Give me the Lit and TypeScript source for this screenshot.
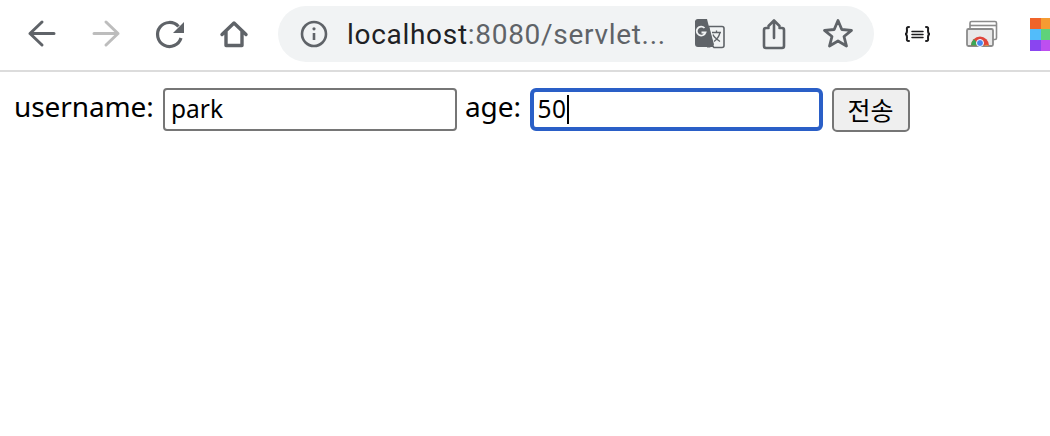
import { LitElement, html, css, svg } from "lit";
import { customElement } from "lit/decorators.js";

const G = "#5f6368";

@customElement("app-root")
export class AppRoot extends LitElement {
  static styles = css`
    :host { display: block; width: 1050px; height: 436px; background: #fff; overflow: hidden; font-family: "Noto Sans", "Noto Sans CJK KR", sans-serif; color: #000; }
    .toolbar { display: flex; align-items: center; height: 70px; border-bottom: 2px solid #dcdcdc; padding-left: 10px; box-sizing: content-box; overflow: hidden; }
    .cell { flex: none; display: block; width: 64px; height: 70px; }
    .omni { flex: none; display: flex; align-items: center; box-sizing: border-box; width: 596px; height: 56px; margin-left: 12px; margin-top: -2px; padding-left: 20px; border-radius: 28px; background: #f1f3f4; }
    .omni .info { flex: none; width: 32px; height: 32px; }
    .url { flex: none; width: 326px; margin-left: 17px; font: 28px Roboto, sans-serif; color: #5f6368; white-space: nowrap; letter-spacing: 0.7px; }
    .url b { font-weight: 400; color: #202124; }
    .tools { flex: none; display: flex; margin-left: 5px; }
    .tools svg { flex: none; display: block; width: 64px; height: 56px; }
    .ext { flex: none; display: block; width: 64px; height: 70px; }
    .ext.first { margin-left: 6px; }
    .grid { flex: none; display: grid; grid-template-columns: 11px 11px; grid-auto-rows: 11px; margin-left: 22px; margin-top: -2px; }
    .form { display: flex; align-items: flex-start; padding: 16px 0 0 14px; }
    .label { font-size: 28px; line-height: 36px; letter-spacing: -0.1px; white-space: nowrap; }
    .user { width: 149px; flex: none; }
    .age { width: 64.5px; flex: none; margin-left: 8px; }
    input { box-sizing: border-box; width: 294px; height: 43px; margin: 0; padding: 0 6px 3px; border: 2px solid #767676; border-radius: 4px; background: #fff; font: 24.5px "Noto Sans", sans-serif; color: #000; outline: none; }
    .wrap { position: relative; flex: none; width: 293px; height: 43px; }
    input.focused { width: 293px; border: 4px solid #2a5fc7; border-radius: 6px; padding: 0 4px 3px; letter-spacing: 0.6px; }
    .caret { position: absolute; left: 37px; top: 7px; width: 2px; height: 29px; background: #000; }
    button { box-sizing: border-box; flex: none; width: 78px; height: 44px; margin: 0 0 0 9px; padding: 0 0 3px; border: 2px solid #767676; border-radius: 5px; background: #efefef; font: 25px "Noto Sans CJK KR", sans-serif; color: #000; }
  `;

  private cell(content: unknown) {
    return html`<svg class="cell" viewBox="0 0 64 70" fill="none" stroke-linecap="round" stroke-linejoin="round">${content}</svg>`;
  }

  render() {
    return html`
      <div class="toolbar">
        ${this.cell(svg`<path d="M44 33.500H20M32 22 20 33.500 32 45" stroke="${G}" stroke-width="3"/>`)}
        ${this.cell(svg`<path d="M20 33.500H44M32 22 44 33.500 32 45" stroke="#bdbdbd" stroke-width="3"/>`)}
        ${this.cell(svg`<path d="M40.500 26.500A12 12 0 1 0 43 38" stroke="${G}" stroke-width="3.200" stroke-linecap="butt"/><path d="M46 22V33H35Z" fill="${G}"/>`)}
        ${this.cell(svg`<path d="M20 34.500 32 23 44 34.500M24 31V45.500H40V31" stroke="${G}" stroke-width="3.400"/>`)}
        <div class="omni">
          <svg class="info" viewBox="0 0 32 32" fill="none"><circle cx="16" cy="16" r="12" stroke="${G}" stroke-width="2.600"/><path d="M16 15V22" stroke="${G}" stroke-width="2.600"/><circle cx="16" cy="10.800" r="1.600" fill="${G}"/></svg>
          <div class="url"><b>localhost</b>:8080/servlet...</div>
          <div class="tools">
            <svg viewBox="0 0 64 56" fill="none">
              <g transform="translate(-2 -0.500)">
                <path d="M19 15.500a3 3 0 0 1 3-2h9l7 28H22a3 3 0 0 1-3-3Z" fill="${G}"/>
                <path d="M31 21h15a2 2 0 0 1 2 2v17a2 2 0 0 1-2 2H38l-1-1" stroke="${G}" stroke-width="1.600"/>
                <path d="M33 20l2 8 3 11-4 3h-3" fill="${G}"/>
                <path d="M28.500 22.500a4.500 4.500 0 1 0 1 4.500h-4" stroke="#f1f3f4" stroke-width="1.800"/>
                <path d="M36 27h9M40.500 25v2M44 27c-1 4-3 7-6 9M37 29c1 3 4 5 7 7" stroke="${G}" stroke-width="1.300"/>
              </g>
            </svg>
            <svg viewBox="0 0 64 56" fill="none" stroke="${G}" stroke-width="2.600" stroke-linejoin="round" stroke-linecap="round">
              <path d="M26.500 22H24a2 2 0 0 0-2 2V40a2 2 0 0 0 2 2h16a2 2 0 0 0 2-2V24a2 2 0 0 0-2-2h-2.500"/>
              <path d="M32 32V15M26.500 20 32 14.500 37.500 20"/>
            </svg>
            <svg viewBox="0 0 64 56" fill="none" stroke="${G}" stroke-width="2.800" stroke-linejoin="round">
              <path d="M32 14.500 35.800 23.500 45.500 24.300 38 30.500 40.500 40 32 35 23.500 40 26 30.500 18.500 24.300 28.200 23.500Z"/>
            </svg>
          </div>
        </div>
        <svg class="ext first" viewBox="0 0 64 70" fill="none" stroke="#1d1d1f" stroke-width="2" stroke-linecap="round">
          <path d="M29 27c-3 0-2 2-2 3.500s-.5 3.500-2 3.500c1.500 0 2 2 2 3.500s-1 3.500 2 3.500"/>
          <path d="M46 27c3 0 2 2 2 3.500s.5 3.500 2 3.500c-1.500 0-2 2-2 3.500s1 3.500-2 3.500"/>
          <path d="M32 31.500h11M32 34.500h11M32 37.500h11" stroke-width="1.500"/>
        </svg>
        <svg class="ext" viewBox="0 0 64 70" fill="none">
          <path d="M26 30v-7a1.500 1.500 0 0 1 1.500-1.500H51a1.500 1.500 0 0 1 1.500 1.500v15a1.500 1.500 0 0 1-1.500 1.500h-2" stroke="#8b8b8b" stroke-width="1.600"/>
          <path d="M26 25.500h26" stroke="#8b8b8b" stroke-width="1.600"/>
          <rect x="23" y="29" width="26" height="17" rx="1.500" fill="#e9e9e9" stroke="#8b8b8b" stroke-width="1.800"/>
          <path d="M27 45.500a9 9 0 0 1 18 0Z" fill="#e0453a"/>
          <path d="M27 45.500a9 9 0 0 1 3-6.500l5 6.500Z" fill="#3aa757"/>
          <path d="M40 45.500a4.500 4.500 0 0 1 5 0Z" fill="#f5c02c"/>
          <circle cx="36" cy="43" r="3.500" fill="#4a86ee" stroke="#fff" stroke-width="1"/>
        </svg>
        <div class="grid">
          ${["#f0642a", "#f59b32", "#52bcfa", "#5fd27a", "#8a45f0", "#bd4ff0"].map((c) => html`<span style="background:${c}"></span>`)}
        </div>
      </div>
      <form class="form">
        <span class="label user">username:</span>
        <input type="text" .value=${"park"} />
        <span class="label age">age:</span>
        <div class="wrap">
          <input class="focused" type="text" .value=${"50"} />
          <span class="caret"></span>
        </div>
        <button type="button">전송</button>
      </form>
    `;
  }
}
